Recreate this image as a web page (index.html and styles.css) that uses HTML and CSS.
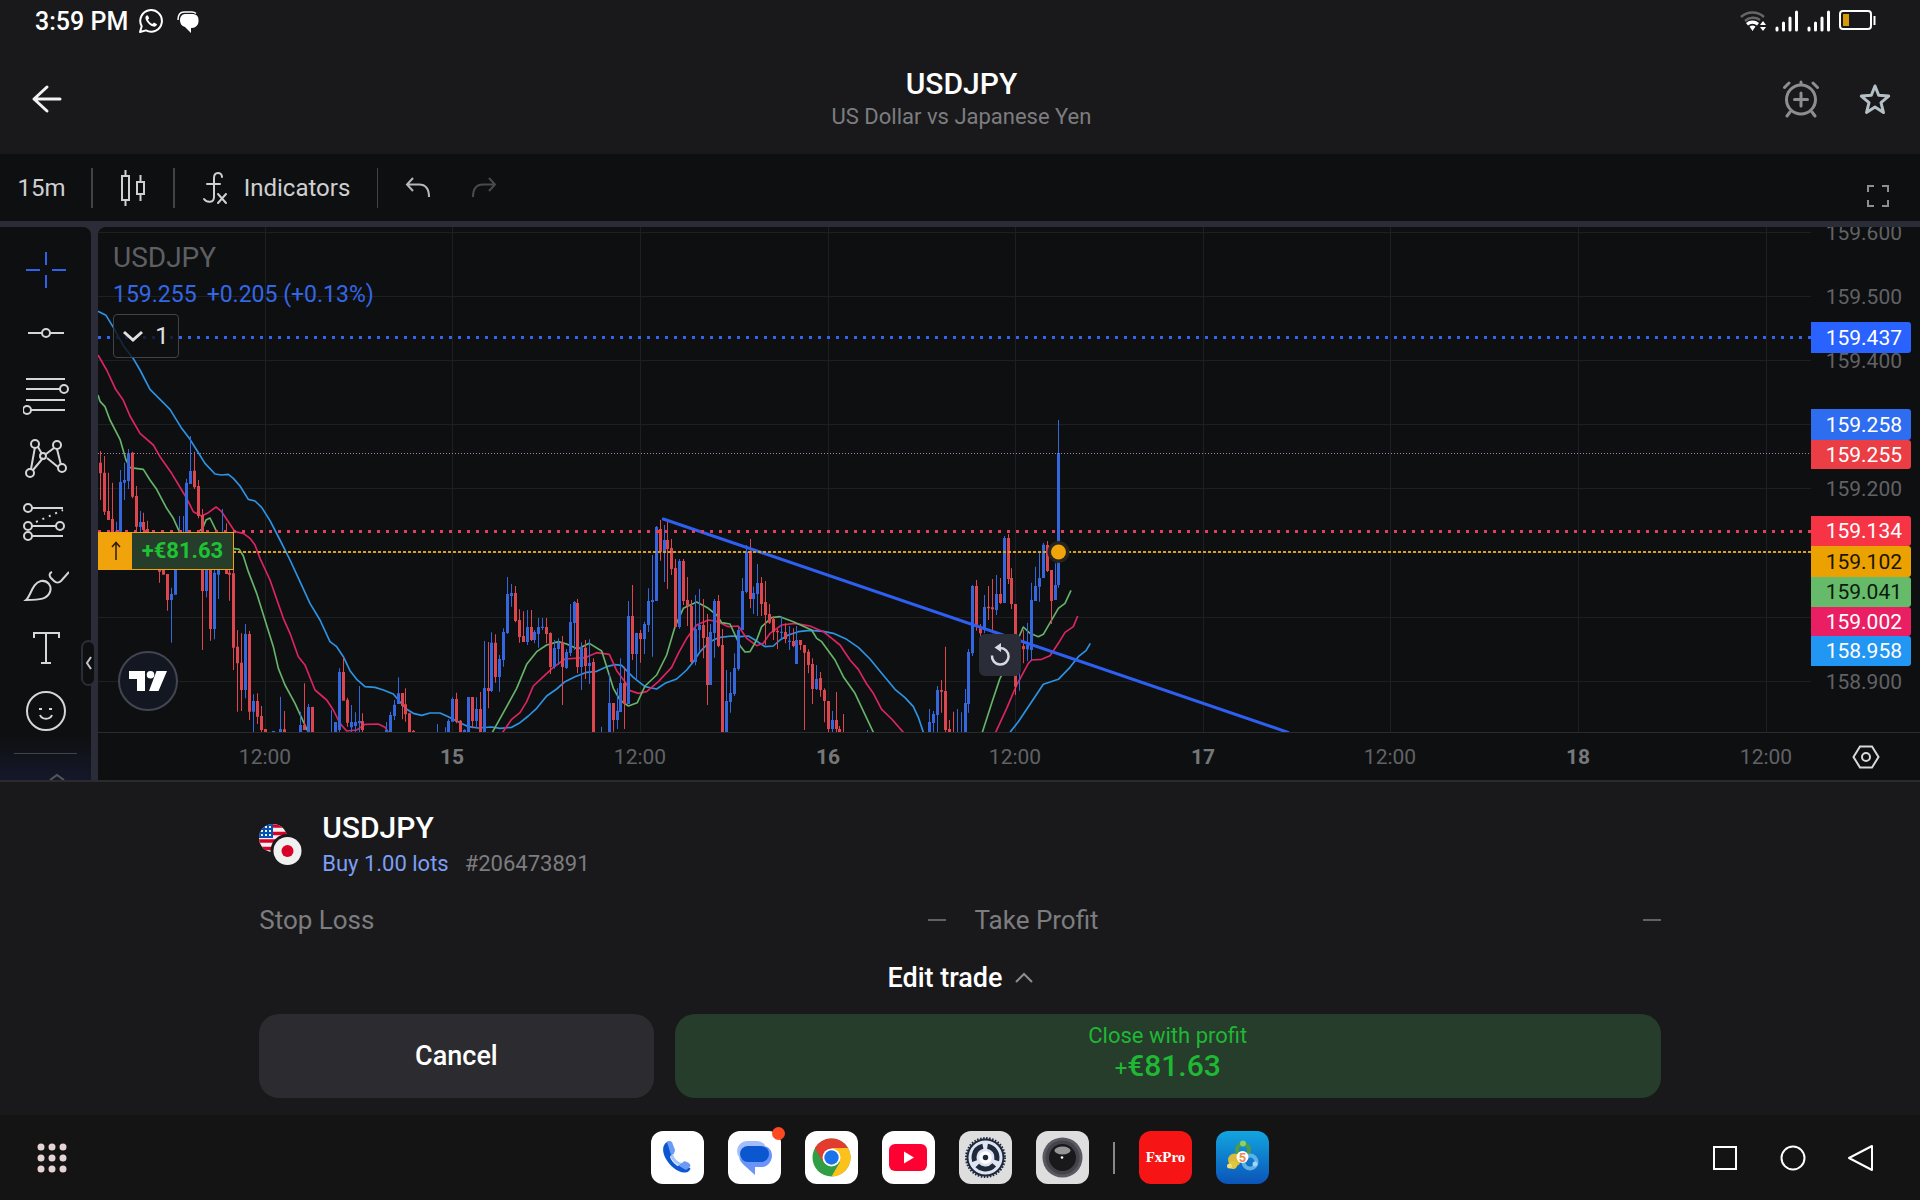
FILE: index.html
```html
<!DOCTYPE html>
<html lang="en">

<head>
    <meta charset="UTF-8">
    <meta name="viewport" content="width=device-width, initial-scale=1.0">
    <title>USDJPY</title>
    <link rel="stylesheet" href="styles.css">
</head>

<body>
    <!-- status bar -->
    <div class="status">
        <span class="clock">3:59 PM</span>
        <svg class="whatsapp" width="26" height="26" viewBox="0 0 26 26">
            <path d="M2 24l1.700-5.800A10.800 10.800 0 1 1 8 22.400z" fill="none" stroke="#fff" stroke-width="2" stroke-linejoin="round" />
            <path d="M8.500 7.500c-1.500 1-1.500 3 0 5.500 1.800 3 4.500 5 7 5.600 1.600.3 3.300-.8 3.500-2.400l-3-1.700-1.600 1.500c-2-.8-3.600-2.400-4.400-4.200l1.200-1.500-1.300-2.900z" fill="#fff" />
        </svg>
        <svg width="24" height="24" viewBox="0 0 24 24">
            <path d="M9 5h8a5.500 5.500 0 0 1 5.500 5.500v2A6.500 6.500 0 0 1 16 19h-1v5l-6-6a7 7 0 0 1-5-7c0-3 2-6 5-6z" fill="#fff" />
            <path d="M2 11c0-5 2-8 6-8h8c2 0 3 .6 4 1.500" fill="none" stroke="#fff" stroke-width="1.500" />
        </svg>
        <div class="status-right">
            <svg width="28" height="22" viewBox="0 0 28 22" fill="none">
                <path d="M2 7a17 17 0 0 1 23 0M6 11a12 12 0 0 1 15-1" stroke="#666" stroke-width="2.500" />
                <path d="M7 13a10 10 0 0 1 13 0l-2 2.500a7 7 0 0 0-9 0zM10.500 16.500a5 5 0 0 1 6 0L13.500 21zM21 15l3-4 3 4zM21 17l3 4 3-4z" fill="#fff" />
            </svg>
            <svg width="24" height="22" viewBox="0 0 24 22" stroke="#fff" stroke-width="3" stroke-linecap="round">
                <path d="M2 20v-2M8.500 20v-7M15 20V8M21.500 20V2" />
            </svg>
            <svg width="24" height="22" viewBox="0 0 24 22" stroke="#fff" stroke-width="3" stroke-linecap="round">
                <path d="M2 20v-2M8.500 20v-7M15 20V8M21.500 20V2" />
            </svg>
            <svg width="37" height="22" viewBox="0 0 37 22">
                <rect x="1" y="1" width="31" height="18" rx="3" fill="none" stroke="#fff" stroke-width="2" />
                <path d="M35.500 6v9" stroke="#fff" stroke-width="2" />
                <rect x="4" y="4" width="6" height="12" fill="#d49a0a" />
            </svg>
        </div>
    </div>

    <header class="header">
        <button class="icon-btn" aria-label="Back">
            <svg width="32" height="30" viewBox="0 0 32 30" fill="none" stroke="#f2f2f2" stroke-width="3" stroke-linecap="round" stroke-linejoin="round">
                <path d="M16 3L3 15l13 12M3 15h26" />
            </svg>
        </button>
        <div class="header-title">
            <h1>USDJPY</h1>
            <p>US Dollar vs Japanese Yen</p>
        </div>
        <div class="header-actions">
            <button class="icon-btn" aria-label="Add alert">
                <svg width="38" height="38" viewBox="0 0 38 38" fill="none" stroke="#8e8e90" stroke-width="3" stroke-linecap="round">
                    <circle cx="19" cy="19.500" r="14.500" />
                    <path d="M19 13v13M12.500 19.500h13M2.500 7.500L7 3M35.500 7.500L31 3M8 32l-3 4M30 32l3 4M19 2v2" />
                </svg>
            </button>
            <button class="icon-btn" aria-label="Favourite">
                <svg width="32" height="32" viewBox="0 0 32 32" fill="none" stroke="#b4bfc6" stroke-width="3" stroke-linejoin="round">
                    <path d="M16 3l3.700 9.300 10 .8-7.700 6.500 2.500 9.900L16 24l-8.500 5.500L10 19.600l-7.700-6.500 10-.8z" />
                </svg>
            </button>
        </div>
    </header>

    <nav class="toolbar">
        <button class="tool tool-interval">15m</button>
        <button class="tool tool-type" aria-label="Chart type">
            <svg width="26" height="36" viewBox="0 0 26 36" fill="none" stroke="#d0d0d2" stroke-width="2">
                <path d="M2 6h7v24H2zM5.500 0v6M5.500 30v6M17 12h7v12h-7zM20.500 5v7M20.500 24v7" />
            </svg>
        </button>
        <button class="tool tool-indicators">
            <svg width="26" height="34" viewBox="0 0 26 34" fill="none" stroke="#d0d0d2" stroke-width="2" stroke-linecap="round">
                <path d="M20 6c0-5-8-6-8 1v19c0 6-7 6-10 2M5 13h13M16 23l8 9M24 23l-8 9" />
            </svg>
            Indicators
        </button>
        <button class="tool tool-history" aria-label="Undo">
            <svg width="26" height="22" viewBox="0 0 26 22" fill="none" stroke="#b8b8ba" stroke-width="2">
                <path d="M8 1L2 7.500l6 6.500M2 7.500h12c7 0 10 4 10 12.500" />
            </svg>
        </button>
        <button class="tool tool-history" aria-label="Redo" disabled>
            <svg width="26" height="22" viewBox="0 0 26 22" fill="none" stroke="#4a4a4c" stroke-width="2">
                <path d="M18 1l6 6.500-6 6.500M24 7.500H12C5 7.500 2 11.500 2 20" />
            </svg>
        </button>
        <button class="tool tool-full" aria-label="Fullscreen">
            <svg width="24" height="24" viewBox="0 0 24 24" fill="none" stroke="#8e8e90" stroke-width="2">
                <path d="M2 8V2h6M16 2h6v6M22 16v6h-6M8 22H2v-6" />
            </svg>
        </button>
    </nav>

    <main class="chart">
        <!-- drawing tools -->
        <div class="draw">
            <button aria-label="Cross"><svg width="46" height="46" viewBox="0 0 46 46"><path d="M23 5v13M23 28v13M3 23h14M29 23h14" /></svg></button>
            <button aria-label="Horizontal line"><svg width="46" height="46" viewBox="0 0 46 46"><path d="M5 23h14M27 23h14" /><circle cx="23" cy="23" r="4" /></svg></button>
            <button aria-label="Fib retracement"><svg width="46" height="46" viewBox="0 0 46 46"><path d="M3 6h39M3 16h34M3 27h39M8 37h34" /><circle cx="41" cy="16" r="4" /><circle cx="4" cy="37" r="4" /></svg></button>
            <button aria-label="Pattern"><svg width="46" height="46" viewBox="0 0 46 46"><path d="M12 11L8 33M10 34l10-12M15 11l4 7M23 18l8-6M34 13l4 16M24 22l11 9" /><circle cx="12" cy="8" r="4" /><circle cx="34" cy="9" r="4" /><circle cx="20" cy="20" r="3" /><circle cx="39" cy="32" r="4" /><circle cx="7" cy="37" r="4" /></svg></button>
            <button aria-label="Forecast"><svg width="46" height="46" viewBox="0 0 46 46"><path d="M9 9h31M9 27h25M9 37h31" /><path d="M13 23L40 11" stroke-dasharray="2 5" /><circle cx="5" cy="9" r="4" /><circle cx="5" cy="27" r="4" /><circle cx="37" cy="27" r="4" /><circle cx="5" cy="37" r="4" /></svg></button>
            <button aria-label="Brush"><svg width="46" height="46" viewBox="0 0 46 46"><path d="M3 38c5-4 6-17 15-19 7-1 11 5 9 11-3 7-9 8-24 8zM29 10c-3 1-3 4-1 6l3 3c2 2 5 2 7 0l8-9" /></svg></button>
            <button aria-label="Text"><svg width="46" height="46" viewBox="0 0 46 46"><path d="M11 13V8h25v5M23 8v30M18 38h10" /></svg></button>
            <button aria-label="Icons"><svg width="46" height="46" viewBox="0 0 46 46"><circle cx="23" cy="23" r="19" /><path d="M17 27c2 5 10 5 12 0" /><path d="M17.500 20v2M27.500 20v2" stroke-width="3" /></svg></button>
            <div class="draw-more">
                <svg width="46" height="26" viewBox="0 0 46 26" stroke="#55565c"><path d="M28 26l7-5 7 5" /></svg>
            </div>
        </div>
        <button class="draw-toggle" aria-label="Hide drawing tools">
            <svg width="8" height="16" viewBox="0 0 8 16" fill="none" stroke="#c4c4c8" stroke-width="2"><path d="M6 2L2 8l4 6" /></svg>
        </button>

        <div class="pane">
            <div class="plot">
                <svg class="plot-svg">
                    <g id="grid"></g>
                    <!-- moving averages and candles are in thirds of a pixel -->
                    <g transform="translate(-8 173) scale(0.333333)">
                        <g class="ma">
                            <polyline class="ma-slow" points="24,-266 48,-254 70,-218 100,-163 130,-124 150,-90 180,-32 210,-2 240,28 275,85 300,118 320,150 345,190 375,222 395,225 415,223 430,235 450,258 475,298 495,303 515,322 540,362 570,420 600,480 630,545 660,610 690,660 720,725 740,740 760,770 780,812 800,838 825,860 855,862 880,870 910,882 925,900 950,928 970,940 995,946 1020,939 1050,939 1075,950 1110,968 1135,980 1165,984 1205,981 1230,985 1265,982 1290,968 1315,948 1340,925 1370,888 1400,867 1425,845 1455,830 1490,817 1520,814 1550,800 1575,794 1595,796 1610,812 1630,832 1665,860 1700,867 1725,850 1760,837 1790,810 1810,785 1830,755 1860,725 1885,713 1925,708 1950,710 1975,708 1995,720 2025,740 2050,738 2070,720 2095,705 2125,695 2160,691 2200,694 2230,700 2270,718 2305,742 2340,777 2375,820 2415,868 2445,893 2470,920 2485,952 2500,997" />
                            <polyline class="ma-slow" points="2760,997 2785,965 2805,935 2825,905 2860,853 2905,838 2940,802 2965,770 2988,752 3001,730" />
                            <polyline class="ma-mid" points="24,-135 50,-90 77,-32 100,1 120,48 150,100 190,135 210,170 245,220 275,270 290,295 310,335 335,348 355,338 378,321 395,335 415,365 435,395 460,400 480,415 495,435 510,475 540,540 580,655 600,700 625,770 645,795 675,870 710,900 730,930 750,970 770,993 800,990 825,973 865,972 885,982 895,997" />
                            <polyline class="ma-mid" points="1238,997 1265,958 1290,938 1310,905 1330,858 1360,830 1390,802 1425,777 1485,773 1520,758 1558,763 1580,812 1605,845 1620,872 1645,880 1670,875 1705,845 1745,802 1765,760 1790,715 1820,675 1855,660 1880,664 1915,680 1945,678 1970,715 2000,737 2020,730 2040,700 2075,675 2115,670 2160,678 2200,695 2250,735 2280,780 2305,808 2330,852 2350,880 2375,928 2405,957 2440,997" />
                            <polyline class="ma-mid" points="2717,997 2750,925 2780,855 2815,790 2825,780 2855,778 2880,767 2905,730 2925,697 2950,680 2963,648" />
                            <polyline class="ma-fast" points="24,-15 30,4 45,20 60,60 90,118 108,180 120,203 160,208 180,240 200,268 230,325 250,355 268,395 300,415 338,385 348,360 360,354 380,395 400,425 432,446 448,448 460,468 475,515 500,580 525,660 550,740 565,805 585,855 615,910 640,965 655,997" />
                            <polyline class="ma-fast" points="1207,997 1250,920 1280,865 1310,793 1340,755 1370,735 1405,725 1430,732 1463,747 1498,730 1535,753 1550,800 1570,865 1590,900 1615,918 1642,908 1665,858 1700,825 1730,765 1755,680 1780,625 1820,606 1855,625 1880,645 1895,668 1920,672 1950,737 1965,756 1980,755 2000,720 2015,680 2045,653 2070,650 2110,665 2165,690 2180,715 2195,725 2235,780 2260,830 2295,880 2350,997" />
                            <polyline class="ma-fast" points="2677,997 2705,910 2730,835 2760,780 2785,715 2800,681 2820,700 2845,710 2860,703 2905,625 2925,610 2943,571" />
                        </g>
                        <g id="candles"></g>
                        <path class="trend" d="M1720 357L3594 997" />
                    </g>
                    <line class="level level-blue" x1="0" x2="100%" y1="110.500" y2="110.500" />
                    <line class="level level-last" x1="0" x2="100%" y1="226.500" y2="226.500" />
                    <line class="level level-red" x1="0" x2="100%" y1="304.500" y2="304.500" />
                    <line class="level level-entry" x1="0" x2="100%" y1="325" y2="325" />
                    <circle cx="960.500" cy="325" r="11" fill="#26231e" />
                    <circle cx="960.500" cy="325" r="7.500" fill="#f0a30a" />
                </svg>

                <div class="legend">
                    <div class="legend-symbol">USDJPY</div>
                    <div class="legend-values"><span>159.255</span><span>+0.205 (+0.13%)</span></div>
                    <button class="legend-count">
                        <svg width="20" height="12" viewBox="0 0 20 12" fill="none" stroke="#e0e0e2" stroke-width="3"><path d="M1 2l9 8 9-8" /></svg>
                        1
                    </button>
                </div>
                <div class="position">
                    <span class="position-side">
                        <svg width="12" height="20" viewBox="0 0 12 20" fill="none" stroke="#2b1d00" stroke-width="1.500"><path d="M6 19V2M2 6l4-4.500L10 6" /></svg>
                    </span>
                    <span class="position-profit">+€81.63</span>
                </div>
                <a class="tv" href="#" aria-label="TradingView">
                    <svg width="38" height="20" viewBox="0 0 38 20" fill="#fff"><path d="M0 0h16v20H8V8H0zM27.500 0H38l-8.500 20H20z" /><circle cx="21.500" cy="3.800" r="3.800" /></svg>
                </a>
                <button class="reset" aria-label="Reset chart">
                    <svg width="20" height="24" viewBox="0 0 20 24" fill="none" stroke="#d8dae2" stroke-width="2.500"><path d="M2 12.500a8.300 8.300 0 1 0 8.300-7.500H9" /><path d="M11 0v9L4.500 4.500z" fill="#d8dae2" stroke="none" /></svg>
                </button>
            </div>
            <svg class="price-axis" id="priceAxis"></svg>
            <div class="time-axis">
                <svg class="time-svg" id="timeAxis"></svg>
                <button class="axis-settings" aria-label="Axis settings">
                    <svg width="28" height="24" viewBox="0 0 28 24" fill="none" stroke="#d8d8da" stroke-width="2"><path d="M8 1.500h12L26.500 12 20 22.500H8L1.500 12z" /><circle cx="14" cy="12" r="4" /></svg>
                </button>
            </div>
        </div>
    </main>

    <section class="trade">
        <div class="trade-inner">
            <div class="trade-head">
                <svg class="flags" width="44" height="44" viewBox="0 0 44 44">
                    <clipPath id="us"><circle cx="14" cy="14" r="14" /></clipPath>
                    <g clip-path="url(#us)">
                        <path d="M0 0h28v30H0z" fill="#f0f0f0" />
                        <path d="M0 2h28M0 9.500h28M0 17h28M0 24.500h28" stroke="#d80027" stroke-width="3.700" />
                        <path d="M0 0h14v14H0z" fill="#0052b4" />
                        <path d="M2 3h12M2 7h12M2 11h12" stroke="#f0f0f0" stroke-width="1.800" stroke-dasharray="2 2" />
                    </g>
                    <circle cx="28.500" cy="27" r="17" fill="#19191b" />
                    <circle cx="28.500" cy="27" r="14" fill="#f0f0f0" />
                    <circle cx="28.500" cy="27" r="6" fill="#d80027" />
                </svg>
                <div>
                    <h2>USDJPY</h2>
                    <p class="trade-meta"><span class="trade-side">Buy 1.00 lots</span><span>#206473891</span></p>
                </div>
            </div>
            <div class="limits">
                <div class="limit"><span>Stop Loss</span><i></i></div>
                <div class="limit"><span>Take Profit</span><i></i></div>
            </div>
            <button class="edit">
                Edit trade
                <svg width="18" height="12" viewBox="0 0 18 12" fill="none" stroke="#8e8e90" stroke-width="2"><path d="M1 10l8-8 8 8" /></svg>
            </button>
            <div class="actions">
                <button class="btn btn-cancel">Cancel</button>
                <button class="btn btn-close"><small>Close with profit</small><span>+<b>€81.63</b></span></button>
            </div>
        </div>
    </section>

    <footer class="dock">
        <button class="dock-all" aria-label="All apps">
            <svg width="30" height="30" viewBox="0 0 30 30" fill="none" stroke="#e6d3d3" stroke-width="7" stroke-linecap="round">
                <path d="M4 4v0M15 4v0M26 4v0M4 15v0M15 15v0M26 15v0M4 26v0M15 26v0M26 26v0" />
            </svg>
        </button>
        <div class="dock-apps">
            <a class="app" href="#" aria-label="Phone">
                <svg viewBox="0 0 53 53">
                    <path d="M16 11c-5 3-5 10-1 17s12 14 19 13.500c3 0 5-2 5.500-4L31 32l-4 3c-3-1-7-6-8-9l4-4-3-11c-1-1-3-1-4 0z" fill="#0b57d0" />
                    <path d="M16 11c1-1 4-1 5 0l3 8c0 3-2 4-4 5zM28 35l4-4c1-1 2-1 4 0 3 1 4 3 3 5l-4 3z" fill="#6b9bf5" />
                    <path d="M19 25c2 4 5 8 9 9.500l3-2.500-3-1c-3-2-5-4-6-8z" fill="#a8c7fa" />
                </svg>
            </a>
            <a class="app app-badge" href="#" aria-label="Messages">
                <svg viewBox="0 0 53 53">
                    <path d="M19 15h16c5 0 9 4 9 9.500S40 36 34 36h-7v8l-10-9c-4-3-6-7-6-11 0-5 4-9 8-9z" fill="#6b93f8" />
                    <rect x="9" y="10" width="30" height="20" rx="10" fill="#a3befa" />
                    <rect x="12" y="15" width="29" height="16" rx="8" fill="#0b57d0" />
                </svg>
            </a>
            <a class="app" href="#" aria-label="Chrome">
                <svg viewBox="0 0 53 53">
                    <circle cx="26.500" cy="26.500" r="19" fill="#2f9e44" />
                    <path d="M26.500 26.500L10 17a19 19 0 0 1 33 0z" fill="#e33b2e" />
                    <path d="M26.500 17H43a19 19 0 0 1-16.500 28.500L35 31z" fill="#fcc21b" />
                    <path d="M10 17l8 14 9-14z" fill="#e33b2e" />
                    <circle cx="26.500" cy="26.500" r="9" fill="#fff" />
                    <circle cx="26.500" cy="26.500" r="7.200" fill="#1a73e8" />
                </svg>
            </a>
            <a class="app" href="#" aria-label="YouTube">
                <svg viewBox="0 0 53 53"><rect x="7" y="13" width="38" height="27" rx="6" fill="#ff0033" /><path d="M22 20.500v12l10-6z" fill="#fff" /></svg>
            </a>
            <a class="app app-gray" href="#" aria-label="Settings">
                <svg viewBox="0 0 53 53" fill="none">
                    <circle cx="26.500" cy="26.500" r="18" fill="#dfe4f0" stroke="#1e2a3c" stroke-width="2" />
                    <circle cx="26.500" cy="26.500" r="19" stroke="#1e2a3c" stroke-width="3" stroke-dasharray="1.500 1.485" />
                    <circle cx="26.500" cy="26.500" r="11.500" stroke="#1e2a3c" stroke-width="5" stroke-dasharray="19 5.090" transform="rotate(-80 26.500 26.500)" />
                    <circle cx="26.500" cy="26.500" r="4.500" fill="#1e2a3c" stroke="#fff" stroke-width="3.500" />
                </svg>
            </a>
            <a class="app app-gray" href="#" aria-label="Camera">
                <svg viewBox="0 0 53 53">
                    <circle cx="26.500" cy="26.500" r="20" fill="#5a5961" />
                    <circle cx="26.500" cy="26.500" r="17" fill="#43434a" />
                    <circle cx="26.500" cy="26.500" r="13.500" fill="#19191c" />
                    <ellipse cx="26.500" cy="19.500" rx="8" ry="4" fill="#b5b5b5" opacity="0.800" />
                    <circle cx="26" cy="26.500" r="1.300" fill="#fff" />
                </svg>
            </a>
            <span class="dock-line"></span>
            <a class="app app-fx" href="#">FxPro</a>
            <a class="app app-mt" href="#" aria-label="MetaTrader 5">
                <svg viewBox="0 0 53 53">
                    <circle cx="27" cy="19" r="6" fill="none" stroke="#4f9c42" stroke-width="4" />
                    <circle cx="27" cy="12.500" r="3" fill="#8bd06a" />
                    <circle cx="18.500" cy="29" r="6.500" fill="#d9bd3a" />
                    <circle cx="17" cy="34" r="4" fill="#e3c63f" />
                    <circle cx="13.500" cy="35" r="2.500" fill="#f1de74" />
                    <circle cx="34" cy="31" r="6.500" fill="none" stroke="#5fb0e4" stroke-width="4" />
                    <circle cx="39" cy="33" r="2.500" fill="#9cd6f7" />
                    <circle cx="26.500" cy="26" r="6" fill="#fff" />
                    <text x="26.500" y="31" text-anchor="middle" class="mt-num">5</text>
                </svg>
            </a>
        </div>
        <div class="dock-nav">
            <button aria-label="Recent"><svg width="28" height="28" viewBox="0 0 28 28"><path d="M3 3h22v22H3z" /></svg></button>
            <button aria-label="Home"><svg width="28" height="28" viewBox="0 0 28 28"><circle cx="14" cy="14" r="11.500" /></svg></button>
            <button aria-label="Back"><svg width="28" height="28" viewBox="0 0 28 28"><path d="M25 2v24L2 14z" stroke-linejoin="round" /></svg></button>
        </div>
    </footer>

    <script src="chart.js"></script>
</body>

</html>
```

FILE: styles.css
```css
* {
    box-sizing: border-box;
}

body {
    margin: 0;
    min-height: 100vh;
    display: flex;
    flex-direction: column;
    background: #19191b;
    color: #fff;
    font-family: Roboto, "Liberation Sans", sans-serif;
}

button {
    display: flex;
    align-items: center;
    justify-content: center;
    margin: 0;
    padding: 0;
    border: 0;
    background: none;
    color: inherit;
    font-family: inherit;
    cursor: pointer;
}

svg {
    display: block;
    flex: none;
}

h1,
h2,
p {
    margin: 0;
    font-weight: 500;
}

/* status bar */

.status {
    display: flex;
    align-items: center;
    height: 42px;
    padding: 0 44px 0 35px;
    gap: 10px;
}

.clock {
    font-size: 25px;
    font-weight: 500;
}

.whatsapp {
    margin-right: 2px;
}

.status-right {
    display: flex;
    align-items: center;
    gap: 8px;
    margin-left: auto;
}

/* header */

.header {
    display: flex;
    align-items: center;
    justify-content: space-between;
    height: 112px;
    padding: 2px 29px 0 31px;
}

.header-title {
    flex: 1;
    padding-left: 78px;
    text-align: center;
}

.header-title h1,
.trade-head h2 {
    font-size: 30px;
    line-height: 36px;
}

.header-title p {
    color: #7d7d80;
    font-size: 22px;
    font-weight: 400;
    line-height: 30px;
}

.header-actions {
    display: flex;
    align-items: center;
    gap: 39px;
}

/* chart toolbar */

.toolbar {
    display: flex;
    align-items: center;
    height: 67px;
    background: #0e0f11;
    color: #cfcfd1;
}

.tool {
    height: 40px;
    font-size: 24px;
    gap: 16px;
}

.tool-interval {
    width: 93px;
    padding-right: 8px;
    border-right: 2px solid #434347;
}

.tool-type {
    width: 82px;
    border-right: 2px solid #434347;
}

.tool-indicators {
    width: 203px;
    border-right: 1px solid #434347;
}

.tool-history {
    width: 26px;
    margin-left: 27px;
}

.tool-history + .tool-history {
    margin-left: 40px;
}

.tool-full {
    align-self: flex-end;
    margin: 0 30px 5px auto;
}

/* chart */

.chart {
    position: relative;
    flex: 1 1 0px;
    display: flex;
    gap: 7px;
    min-height: 560px;
    padding-top: 6px;
    background: #2a2d38;
    border-bottom: 2px solid #2b2b2e;
}

.draw {
    display: flex;
    flex-direction: column;
    align-items: center;
    width: 91px;
    padding-top: 11px;
    overflow: hidden;
    background: linear-gradient(#0e0f11 92%, #15182a);
    border-top-right-radius: 8px;
}

.draw button {
    flex: none;
    height: 63px;
}

.draw svg {
    fill: none;
    stroke-width: 2;
}

.draw button svg {
    stroke: #d6d6d8;
}

.draw button:first-child svg {
    stroke: #2f62e8;
}

.draw-more {
    width: 63px;
    margin-top: 11px;
    border-top: 1px solid #434347;
    padding-left: 8px;
}

.draw-toggle {
    position: absolute;
    left: 81px;
    top: 419px;
    width: 15px;
    height: 46px;
    border: 2px solid #2a2d38;
    border-radius: 8px;
    background: #0e0f11;
}

.pane {
    flex: 1;
    display: grid;
    grid-template-columns: 1fr 109px;
    grid-template-rows: 1fr 48px;
    background: #0e0f11;
    border-top-left-radius: 8px;
    overflow: hidden;
}

.plot {
    position: relative;
    overflow: hidden;
}

.plot-svg {
    position: absolute;
    width: 100%;
    height: 100%;
}

.grid-line {
    stroke: #1e1f22;
}

.ma {
    fill: none;
    stroke-width: 5;
    stroke-linejoin: round;
}

.ma-slow {
    stroke: #2d93e4;
}

.ma-mid {
    stroke: #dc2462;
}

.ma-fast {
    stroke: #66b36a;
}

.up {
    fill: #3467dc;
}

.down {
    fill: #dc474f;
}

.trend {
    stroke: #2f5ff0;
    stroke-width: 9;
    stroke-linecap: round;
}

.level-blue {
    stroke: #3464ef;
    stroke-width: 3;
    stroke-dasharray: 3 6;
}

.level-red {
    stroke: #e2405a;
    stroke-width: 3;
    stroke-dasharray: 3 6;
}

.level-last {
    stroke: #b07abb;
    stroke-dasharray: 1 2;
}

.level-entry {
    stroke: #d9a024;
    stroke-width: 2;
    stroke-dasharray: 3 2;
}

.legend {
    position: absolute;
    left: 15px;
    top: 13px;
}

.legend-symbol {
    color: #5e5f62;
    font-size: 28px;
    line-height: 36px;
}

.legend-values {
    display: flex;
    gap: 10px;
    color: #3467e6;
    font-size: 23px;
    line-height: 38px;
}

.legend-count {
    gap: 12px;
    width: 66px;
    height: 44px;
    border: 1px solid #434347;
    border-radius: 4px;
    background: rgba(14, 15, 17, 0.8);
    color: #e0e0e2;
    font-size: 24px;
}

.position {
    position: absolute;
    left: 0;
    top: 305px;
    display: flex;
    height: 38px;
    border: 1px solid #f0a30a;
}

.position-side {
    display: flex;
    align-items: center;
    justify-content: center;
    width: 33px;
    background: #f0a30a;
}

.position-profit {
    width: 101px;
    background: #253d2a;
    color: #1fc233;
    font-size: 22px;
    font-weight: 700;
    line-height: 36px;
    text-align: center;
}

.tv {
    position: absolute;
    left: 20px;
    top: 424px;
    display: flex;
    align-items: center;
    justify-content: center;
    width: 60px;
    height: 60px;
    border: 2px solid #434651;
    border-radius: 50%;
    background: #131722;
}

.reset {
    position: absolute;
    left: 881px;
    top: 407px;
    width: 42px;
    height: 42px;
    border-radius: 6px;
    background: #2a2d38;
}

.price-axis {
    width: 100%;
    height: 100%;
}

.axis-label {
    fill: #616265;
    font-size: 21px;
}

.axis-label.day {
    fill: #77787b;
    font-weight: 700;
}

.price-tag {
    font-size: 21px;
}

.time-axis {
    grid-column: 1 / 3;
    display: flex;
    align-items: center;
    border-top: 1px solid #2b2b2e;
}

.time-svg {
    flex: 1;
    height: 100%;
}

.axis-settings {
    width: 109px;
}

/* trade panel */

.trade {
    padding: 28px 0 17px;
}

.trade-inner {
    width: 73%;
    margin: 0 auto;
}

.trade-head {
    display: flex;
    align-items: center;
    gap: 19px;
}

.trade-meta {
    display: flex;
    gap: 16px;
    color: #7d7d80;
    font-size: 22px;
    font-weight: 400;
    line-height: 36px;
}

.trade-side {
    color: #7c9ff5;
}

.limits {
    display: grid;
    grid-template-columns: 1fr 1fr;
    gap: 29px;
    margin-top: 20px;
    color: #7d7d80;
    font-size: 26px;
    line-height: 36px;
}

.limit {
    display: flex;
    align-items: center;
    justify-content: space-between;
}

.limit i {
    width: 18px;
    height: 2px;
    background: #626265;
}

.edit {
    gap: 12px;
    margin: 22px auto 18px;
    height: 36px;
    font-size: 27px;
    font-weight: 500;
}

.actions {
    display: grid;
    grid-template-columns: 2fr 5fr;
    gap: 21px;
}

.btn {
    height: 84px;
    border-radius: 20px;
    font-size: 27px;
    font-weight: 500;
}

.btn-cancel {
    background: #2c2b30;
}

.btn-close {
    flex-direction: column;
    padding-bottom: 6px;
    background: #253d2a;
    color: #1fb835;
}

.btn-close small {
    font-size: 22px;
    font-weight: 400;
    line-height: 28px;
}

.btn-close span {
    font-size: 22px;
    font-weight: 400;
    line-height: 32px;
}

.btn-close b {
    font-size: 30px;
    font-weight: 500;
}

/* dock */

.dock {
    display: grid;
    grid-template-columns: 1fr auto 1fr;
    align-items: center;
    height: 85px;
    background: #141414;
}

.dock-all {
    justify-self: start;
    margin-left: 37px;
}

.dock-apps {
    display: flex;
    align-items: center;
    gap: 24px;
}

.app {
    position: relative;
    width: 53px;
    height: 53px;
    border-radius: 12px;
    background: #fff;
}

.app-badge::after {
    content: "";
    position: absolute;
    top: -4px;
    right: -4px;
    width: 13px;
    height: 13px;
    border-radius: 50%;
    background: #ff4a21;
}

.app-gray {
    background: #dedede;
}

.app-fx {
    background: #f71414;
    color: #fff;
    font: 700 15px/53px "Liberation Serif", serif;
    text-align: center;
    text-decoration: none;
}

.app-mt {
    background: linear-gradient(#12a5e0, #0b54b8);
}

.mt-num {
    fill: #f08a4b;
    font-size: 13px;
    font-weight: 700;
}

.dock-line {
    width: 2px;
    height: 32px;
    background: #88888a;
}

.dock-nav {
    display: flex;
    justify-self: end;
    gap: 40px;
    margin-right: 45px;
}

.dock-nav svg {
    fill: none;
    stroke: #fff;
    stroke-width: 2;
}
```

FILE: chart.js
```js
// [bar, up, high, top, bottom, low] in thirds of a pixel
var bars = [
    [0,0,153,188,220,300],[1,0,168,218,335,345],[2,0,218,333,360,360],[3,0,248,357,400,400],[4,1,365,392,400,400],
    [5,1,210,246,395,400],[6,1,188,240,248,300],[7,1,147,160,243,267],[8,0,155,158,290,295],[9,0,258,288,380,397],
    [10,1,333,366,381,400],[11,0,338,366,390,400],[12,0,362,387,400,400],[15,0,500,505,515,548],[16,0,500,505,524,524],
    [17,0,522,522,600,632],[18,1,563,582,600,728],[19,1,500,500,584,584],[20,1,348,400,500,500],[21,1,348,400,500,500],
    [22,1,236,248,400,400],[23,1,108,213,252,252],[24,0,155,212,262,267],[25,0,240,258,348,355],[26,0,327,345,573,750],
    [27,1,500,505,573,592],[28,0,500,500,687,722],[29,1,500,518,687,718],[30,1,500,505,524,597],[31,1,327,400,500,500],
    [32,0,370,500,522,522],[33,0,500,518,524,602],[34,0,510,520,743,810],[35,0,690,740,790,935],[36,0,700,788,870,933],
    [37,1,672,702,870,895],[38,0,693,702,935,960],[39,1,883,903,935,997],[40,0,880,903,950,972],[41,0,918,948,990,997],
    [42,0,987,987,997,997],[44,1,993,993,997,997],[46,1,890,987,997,997],[47,0,933,988,997,997],[51,1,935,975,997,997],
    [52,0,850,975,990,990],[53,1,912,921,997,997],[54,0,920,921,997,997],[59,1,930,997,997,997],[60,1,966,966,997,997],
    [61,1,805,816,990,997],[62,0,770,816,902,902],[63,0,893,899,968,980],[64,1,915,966,982,997],[65,1,937,966,978,997],
    [66,1,858,963,970,997],[67,0,940,963,990,997],[73,1,966,990,997,997],[74,1,935,945,997,997],[75,1,900,914,948,960],
    [76,1,832,880,912,912],[77,0,879,879,918,958],[78,0,865,913,943,965],[79,0,938,940,997,997],[80,0,990,992,997,997],
    [86,1,972,997,997,997],[88,1,982,997,997,997],[89,1,958,963,997,997],[90,1,892,897,965,965],[91,0,878,897,965,970],
    [92,0,960,962,997,997],[93,1,988,990,997,997],[94,1,891,891,997,997],[95,0,891,891,963,985],[96,1,892,927,963,985],
    [97,0,876,927,997,997],[98,1,723,864,997,997],[99,0,726,864,873,925],[100,1,697,728,873,876],[101,0,703,728,831,848],
    [102,1,765,777,831,875],[103,1,685,696,780,800],[104,1,531,582,699,702],[105,1,552,579,588,620],[106,0,558,579,663,667],
    [107,0,628,660,711,728],[108,0,634,708,726,726],[109,1,630,681,726,735],[110,0,630,681,720,723],[111,1,690,696,720,730],
    [112,1,654,681,702,743],[113,1,654,680,684,690],[114,0,654,681,702,730],[115,0,697,699,801,822],[116,1,720,744,801,806],
    [117,1,715,729,747,795],[118,0,708,726,801,915],[119,1,747,756,804,807],[120,1,612,666,759,768],[121,1,603,606,669,750],
    [122,0,597,609,801,820],[123,1,727,741,801,870],[124,0,720,743,798,837],[125,1,718,789,798,852],[126,0,775,786,997,997],
    [128,1,980,997,997,997],[130,1,820,909,997,997],[131,0,909,909,960,995],[132,1,865,932,960,987],[133,1,775,849,936,936],
    [134,0,800,849,912,987],[135,1,603,648,912,912],[136,0,555,648,762,780],[137,1,698,699,762,840],[138,0,690,699,717,788],
    [139,1,665,672,717,762],[140,1,565,603,675,696],[141,1,465,600,606,770],[142,1,378,381,603,603],[143,0,360,387,456,482],
    [144,1,375,420,456,546],[145,0,365,420,447,567],[146,0,417,444,507,525],[147,0,477,504,681,681],[148,1,477,483,681,686],
    [149,0,477,483,603,615],[150,0,531,600,618,678],[151,0,600,618,786,790],[152,1,585,687,786,796],[153,1,567,675,690,752],
    [154,0,597,675,714,775],[155,0,642,711,855,915],[156,1,672,696,855,855],[157,1,597,603,699,773],[158,0,585,603,738,742],
    [159,0,687,735,997,997],[160,1,810,903,997,997],[161,1,816,879,906,938],[162,1,760,804,882,888],[163,1,680,690,807,812],
    [164,1,534,573,690,690],[165,1,435,455,576,580],[166,0,417,453,597,625],[167,1,560,579,597,642],[168,1,492,549,582,648],
    [169,0,531,549,612,648],[170,0,543,606,645,735],[171,0,612,642,668,672],[172,0,648,657,696,720],[173,0,687,692,697,747],
    [174,1,648,695,699,720],[175,0,670,696,717,730],[176,1,678,722,726,750],[177,0,685,723,738,742],[178,1,678,720,792,792],
    [179,0,720,720,735,750],[180,0,735,735,758,990],[181,0,748,755,795,820],[182,0,775,792,867,912],[183,1,795,837,867,870],
    [184,0,816,834,870,890],[185,0,865,870,903,967],[186,0,903,903,987,997],[187,1,933,960,987,997],[188,0,876,960,987,997],
    [189,0,978,987,997,997],[190,0,942,997,997,997],[196,1,990,997,997,997],[212,1,927,966,997,997],[213,1,933,942,969,997],
    [214,1,858,870,945,997],[215,0,840,870,875,938],[216,0,740,873,990,997],[217,0,960,987,997,997],[218,0,935,997,997,997],
    [219,1,927,997,997,997],[220,1,937,997,997,997],[221,1,867,909,997,997],[222,1,747,756,912,938],[223,1,555,558,760,768],
    [224,0,540,558,680,692],[225,0,672,680,700,710],[226,1,585,621,690,700],[227,0,558,620,625,660],[228,0,537,622,628,700],
    [229,1,525,582,630,645],[230,0,534,582,609,612],[231,1,408,414,609,609],[232,0,402,414,537,552],[233,0,505,534,612,627],
    [234,0,612,612,860,885],[235,1,720,740,800,872],[236,0,690,738,748,790],[237,1,668,735,748,783],[238,1,548,600,750,782],
    [239,1,500,558,603,603],[240,1,455,534,560,605],[241,1,428,434,534,534],[242,0,423,435,513,516],[243,0,510,510,603,672],
    [244,1,490,555,600,600],[245,1,60,159,555,563]
];

document.getElementById("candles").innerHTML = bars.map(function(b) {
    // snap to whole pixels
    var x = Math.round((31.4 + 11.73 * b[0]) / 3) * 3;
    return '<path class="' + (b[1] ? "up" : "down") + '" d="M' + (x - 3) + " " + b[3] + "h9V" + b[4] + "h-9z" +
        "M" + x + " " + b[2] + "h3V" + b[5] + 'h-3z"/>';
}).join("");

// time axis and vertical grid, every 48 bars
var times = ["12:00", "15", "12:00", "16", "12:00", "17", "12:00", "18", "12:00"];
var grid = "";
document.getElementById("timeAxis").innerHTML = times.map(function(t, i) {
    var x = Math.floor(167.2 + i * 187.6);
    grid += '<line class="grid-line" x1="' + (x + 0.5) + '" x2="' + (x + 0.5) + '" y1="0" y2="100%"/>';
    return '<text class="axis-label' + (t.length == 2 ? " day" : "") + '" x="' + x + '" y="31" text-anchor="middle">' + t + "</text>";
}).join("");

// price axis and horizontal grid
var axis = "";
var covered = [159.3, 159.1, 159];
[159.6, 159.5, 159.4, 159.3, 159.2, 159.1, 159, 158.9].forEach(function(p) {
    var y = Math.round(69 + (159.5 - p) * 641);
    grid += '<line class="grid-line" x1="0" x2="100%" y1="' + (y + 0.5) + '" y2="' + (y + 0.5) + '"/>';
    // no label where a price tag sits
    if (covered.indexOf(p) < 0) {
        axis += '<text class="axis-label" x="91" y="' + (y + 8) + '" text-anchor="end">' + p.toFixed(3) + "</text>";
    }
});
document.getElementById("grid").innerHTML = grid;

// [text, top, height, background, color]
var tags = [
    ["159.437", 95, 31, "#2962ff", "#fff"],
    ["159.258", 182, 31, "#2f6df0", "#fff"],
    ["159.255", 213, 29, "#ea3d44", "#fff"],
    ["159.134", 289, 30, "#f73346", "#fff"],
    ["159.102", 319, 31, "#eba200", "#1c1400"],
    ["159.041", 350, 30, "#66bb6a", "#0b1a0c"],
    ["159.002", 380, 29, "#ea1e62", "#fff"],
    ["158.958", 409, 30, "#2196f3", "#fff"]
];
tags.forEach(function(t) {
    axis += '<path d="M0 ' + t[1] + "h97q3 0 3 3v" + (t[2] - 6) + 'q0 3-3 3H0z" fill="' + t[3] + '"/>' +
        '<text class="price-tag" x="91" y="' + (t[1] + Math.ceil(t[2] / 2) + 7) + '" text-anchor="end" fill="' + t[4] + '">' + t[0] + "</text>";
});
document.getElementById("priceAxis").innerHTML = axis;
```
